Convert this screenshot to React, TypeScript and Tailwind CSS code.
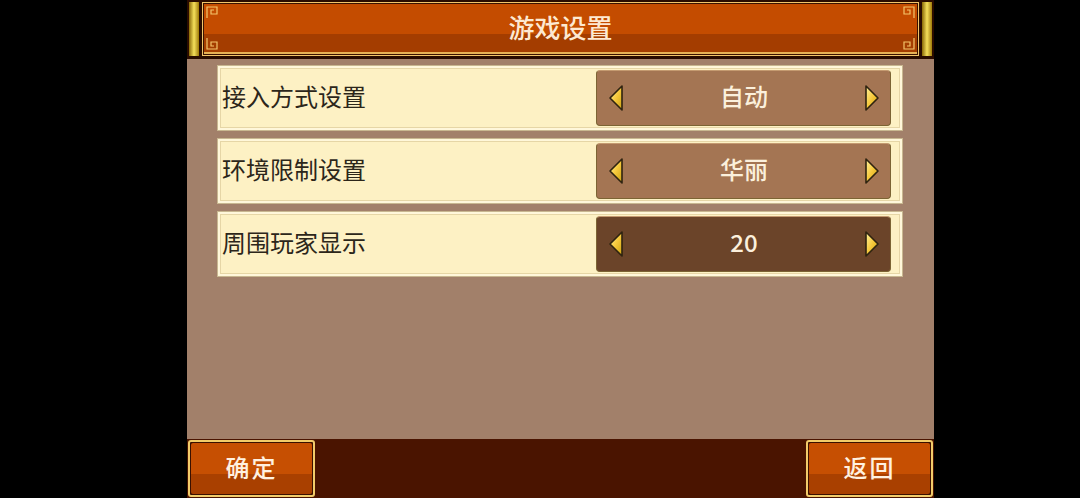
import React from "react";

/* ---------- Data ---------- */
const SETTINGS = [
  { id: "access", label: "接入方式设置", value: "自动", active: false },
  { id: "env", label: "环境限制设置", value: "华丽", active: false },
  { id: "nearby", label: "周围玩家显示", value: "20", active: true },
];

const FONT = "font-['Noto_Sans_CJK_SC','Noto_Sans',sans-serif]";

/* ---------- Fret corner ornament ---------- */
const Fret = ({ className }: { className: string }) => (
  <svg viewBox="0 0 12 12" className={className} fill="none" stroke="#f3c46a" strokeWidth="1.2">
    <path d="M1 12V1h10v7H5V4h3" />
  </svg>
);

/* ---------- Arrow ---------- */
const Arrow = ({ dir }: { dir: "left" | "right" }) => (
  <svg viewBox="0 0 16 28" className="w-[16px] h-[28px]">
    <defs>
      <linearGradient id={`ag-${dir}`} x1="0" y1="0" x2="1" y2="1">
        <stop offset="0" stopColor="#fff3a0" />
        <stop offset="0.5" stopColor="#f6c93c" />
        <stop offset="1" stopColor="#c9a010" />
      </linearGradient>
    </defs>
    <path
      d={dir === "left" ? "M14 2L2 14l12 12z" : "M2 2l12 12L2 26z"}
      fill={`url(#ag-${dir})`}
      stroke="#2f2410"
      strokeWidth="1.6"
      strokeLinejoin="round"
    />
  </svg>
);

/* ---------- Gold pillar ---------- */
const Pillar = () => (
  <div className="w-[10px] h-full bg-gradient-to-r from-[#8a6a00] via-[#f6e05a] to-[#a07c00]" />
);

/* ---------- Setting row ---------- */
const SettingRow = ({ label, value, active }: { label: string; value: string; active: boolean }) => (
  <div className="h-[66px] border border-[#c8b790] bg-[#fff7da] p-[2px]">
    <div className="h-full border border-[#e6d6a6] bg-[#fdf1c4] flex items-center pl-[1px] pr-[8px]">
      <span className="text-[24px] leading-none text-[#2c261a] mb-[5px]">{label}</span>
      <div
        className={`ml-auto w-[295px] h-[56px] rounded-[4px] border border-[#7c6434] border-t-[#c49a70] flex items-center justify-between pl-[11px] pr-[10px] ${
          active ? "bg-[#6b4429]" : "bg-[#a47553]"
        }`}
      >
        <Arrow dir="left" />
        <span className="text-[24px] leading-none text-[#fbf0dc] font-medium mb-[5px]">{value}</span>
        <Arrow dir="right" />
      </div>
    </div>
  </div>
);

/* ---------- Footer button ---------- */
const FooterButton = ({ text }: { text: string }) => (
  <button className="w-[127px] h-[57px] rounded-[3px] border-2 border-[#f2cc6a] bg-[#3a1000] p-[1px]">
    <div className="h-full rounded-[2px] bg-gradient-to-b from-[#c64f02] from-60% to-[#a94000] to-60% flex items-center justify-center">
      <span className="text-[24px] leading-none text-[#fff1e0] font-medium tracking-[2px] mb-[3px]">{text}</span>
    </div>
  </button>
);

/* ---------- Page ---------- */
export default function App() {
  return (
    <div className={`w-[1080px] h-[498px] bg-black overflow-hidden ${FONT}`}>
      <div className="ml-[187px] w-[747px] h-full flex flex-col">
        {/* Title bar */}
        <div className="h-[59px] bg-[#2a0c00] flex items-stretch px-[2px] pt-[2px] pb-[3px] gap-[3px]">
          <Pillar />
          <div className="flex-1 border border-[#f2c56a] bg-[#3a1200] p-[1px]">
            <div className="relative h-full bg-gradient-to-b from-[#c44c00] from-62% to-[#a43d00] to-62% border-b-2 border-[#e7b256] flex items-center justify-center">
              <Fret className="absolute left-[2px] top-[2px] w-[12px] h-[12px]" />
              <Fret className="absolute left-[2px] bottom-[2px] w-[12px] h-[12px] -scale-y-100" />
              <Fret className="absolute right-[2px] top-[2px] w-[12px] h-[12px] -scale-x-100" />
              <Fret className="absolute right-[2px] bottom-[2px] w-[12px] h-[12px] -scale-100" />
              <span className="text-[26px] leading-none text-[#fde9d2] font-medium mb-[3px]">游戏设置</span>
            </div>
          </div>
          <Pillar />
        </div>

        {/* Settings list */}
        <div className="flex-1 bg-[#a2806a] pl-[30px] pr-[31px] pt-[6px] flex flex-col gap-[7px]">
          {SETTINGS.map((s) => (
            <SettingRow key={s.id} label={s.label} value={s.value} active={s.active} />
          ))}
        </div>

        {/* Footer */}
        <div className="h-[59px] bg-[#4a1400] flex items-center justify-between pl-[1px] pr-[1px]">
          <FooterButton text="确定" />
          <FooterButton text="返回" />
        </div>
      </div>
    </div>
  );
}
